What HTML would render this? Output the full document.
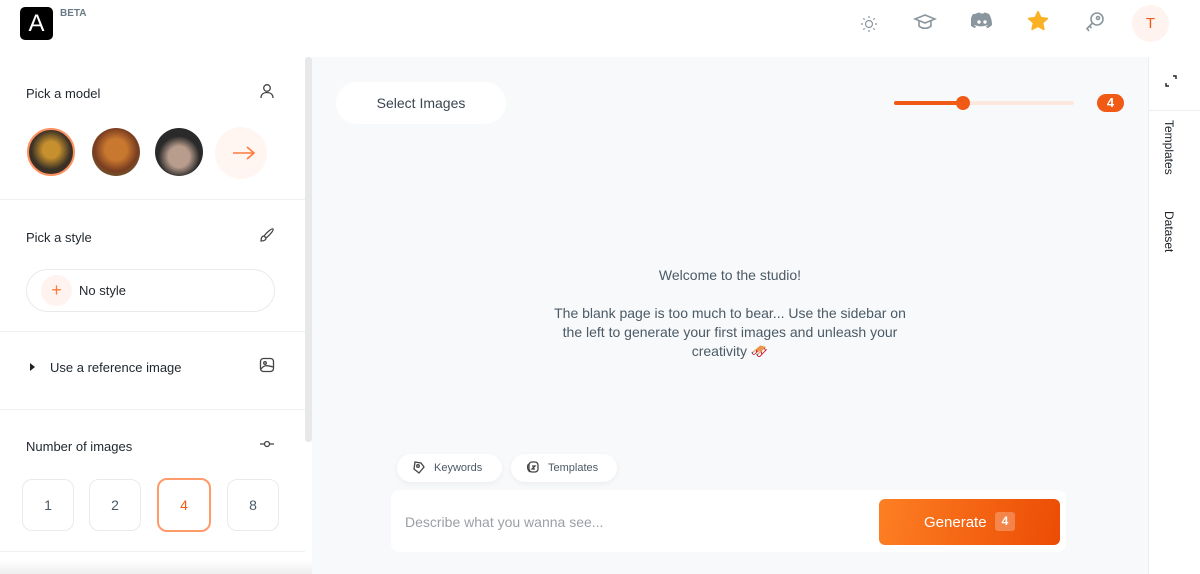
<!DOCTYPE html>
<html><head><meta charset="utf-8"><style>
*{box-sizing:border-box;margin:0;padding:0}
body{width:1200px;height:574px;overflow:hidden;background:#fff;font-family:"Liberation Sans",sans-serif;position:relative;color:#2d3339}
.abs{position:absolute}
.hdr{left:0;top:0;width:1200px;height:57px;background:#fff}
.logo{left:20px;top:7px;width:33px;height:33px;background:#000;border-radius:5px;color:#fff;font-size:24px;text-align:center;line-height:34px}
.beta{left:60px;top:8px;font-size:10px;font-weight:bold;color:#6b7a85}
.side{left:0;top:57px;width:305px;height:517px;background:#fff}
.sb{left:305px;top:57px;width:7px;height:385px;background:#e8e8e8;border-radius:3px}
.main{left:312px;top:57px;width:836px;height:517px;background:#f8f9fa}
.right{left:1148px;top:57px;width:52px;height:517px;background:#fff;border-left:1px solid #eee}
.h{font-size:13px;color:#1f262c}
.sep{height:1px;background:#eef0f2;left:0;width:305px}
.av{width:48px;height:48px;border-radius:50%}
.num{width:52px;height:52px;border:1px solid #e8eaec;border-radius:10px;text-align:center;line-height:50px;font-size:14px;color:#4a5a66}
.ic{stroke:#444;fill:none;stroke-width:1.3}
</style></head><body>
<div class="abs hdr"></div>
<div class="abs logo">A</div>
<div class="abs beta">BETA</div>
<svg class="abs" style="left:860px;top:15px" width="18" height="18" viewBox="0 0 18 18"><g stroke="#8a969e" stroke-width="1.2" fill="none"><circle cx="9" cy="9" r="3.5"/><path d="M9 1v2M9 15v2M1 9h2M15 9h2M3.3 3.3l1.4 1.4M13.3 13.3l1.4 1.4M3.3 14.7l1.4-1.4M13.3 4.7l1.4-1.4"/></g></svg>
<svg class="abs" style="left:913px;top:12px" width="24" height="20" viewBox="0 0 24 20"><g stroke="#8a969e" stroke-width="1.6" fill="none"><path d="M2 7l10-4 10 4-10 4z"/><path d="M6 9v5c3 3 9 3 12 0V9"/></g></svg>
<svg class="abs" style="left:971px;top:12px" width="22" height="18" viewBox="0 0 22 18"><path fill="#8a969e" d="M4 2c2-1 4-1.5 5-1.5l.5 1h3l.5-1c1 0 3 .5 5 1.5 2 3 3 7 3 11-2 2-4 3-5 3l-1-2c1-.3 2-.8 2-.8l-.5-.3c-4 2-9 2-13 0l-.5.3s1 .5 2 .8l-1 2c-1 0-3-1-5-3 0-4 1-8 3-11z"/><circle cx="8" cy="10" r="1.7" fill="#fff"/><circle cx="14" cy="10" r="1.7" fill="#fff"/></svg>
<svg class="abs" style="left:1027px;top:10px" width="22" height="22" viewBox="0 0 24 24"><path fill="#fbb124" stroke="#fbb124" stroke-linejoin="round" stroke-width="2" d="M12 2l3 6.5 7 .8-5.2 4.8 1.5 7L12 17.5 5.7 21l1.5-7L2 9.3l7-.8z"/></svg>
<svg class="abs" style="left:1084px;top:11px" width="22" height="22" viewBox="0 0 22 22"><g stroke="#8a969e" stroke-width="1.6" fill="none"><circle cx="13" cy="8" r="6"/><circle cx="14" cy="7" r="1.5"/><path d="M8.5 12L3 17.5 5 20M5.5 15l2 2"/></g></svg>
<div class="abs" style="left:1132px;top:5px;width:37px;height:37px;border-radius:50%;background:#fff3ef;color:#f05a14;text-align:center;line-height:37px;font-size:15px">T</div>

<div class="abs side"></div>
<div class="abs sb"></div>
<div class="abs h" style="left:26px;top:86px">Pick a model</div>
<svg class="abs" style="left:259px;top:83px" width="16" height="16" viewBox="0 0 16 16"><g class="ic"><circle cx="8" cy="5" r="3.3"/><path d="M2 15c0-4 3-5.5 6-5.5s6 1.5 6 5.5"/></g></svg>
<div class="abs av" style="left:27px;top:128px;border:2px solid #ff9160;background:radial-gradient(circle at 50% 45%,#c7902e 0 25%,#3a3126 60%)"></div>
<div class="abs av" style="left:92px;top:128px;background:radial-gradient(circle at 50% 45%,#c9782f 0 30%,#7a3d20 60%,#5a7a45 100%)"></div>
<div class="abs av" style="left:155px;top:128px;background:radial-gradient(circle at 50% 60%,#b89c8c 0 28%,#2a2a2a 55%)"></div>
<div class="abs" style="left:215px;top:127px;width:52px;height:52px;border-radius:50%;background:#fff5f1"></div>
<svg class="abs" style="left:231px;top:144px" width="26" height="18" viewBox="0 0 26 18"><path d="M2 9h21M16 3l7 6-7 6" stroke="#ff7a3d" stroke-width="1.6" fill="none"/></svg>
<div class="abs sep" style="top:199px"></div>
<div class="abs h" style="left:26px;top:230px">Pick a style</div>
<svg class="abs" style="left:259px;top:227px" width="16" height="16" viewBox="0 0 16 16"><g class="ic"><path d="M14 2c-1 -1-6 3-9 7l2 2c4-3 8-8 7-9z"/><path d="M5 9c-2 0-3 2-3 5 3 0 5-1 5-3"/></g></svg>
<div class="abs" style="left:26px;top:269px;width:249px;height:43px;border:1px solid #e8eaec;border-radius:22px"></div>
<div class="abs" style="left:41px;top:275px;width:31px;height:31px;border-radius:50%;background:#fff3ef;color:#ff7a3d;text-align:center;line-height:30px;font-size:18px">+</div>
<div class="abs h" style="left:79px;top:283px">No style</div>
<div class="abs sep" style="top:331px"></div>
<div class="abs" style="left:30px;top:363px;width:0;height:0;border-left:5px solid #1c2329;border-top:4px solid transparent;border-bottom:4px solid transparent"></div>
<div class="abs h" style="left:50px;top:360px">Use a reference image</div>
<svg class="abs" style="left:259px;top:357px" width="16" height="16" viewBox="0 0 16 16"><g class="ic"><rect x="1.5" y="1.5" width="13" height="13" rx="3"/><circle cx="6" cy="6" r="1.3"/><path d="M2 12c3-4 6-4 12-2"/></g></svg>
<div class="abs sep" style="top:409px"></div>
<div class="abs h" style="left:26px;top:439px">Number of images</div>
<svg class="abs" style="left:259px;top:438px" width="16" height="12" viewBox="0 0 16 12"><g class="ic"><circle cx="8" cy="6" r="2.5"/><path d="M1 6h4.5M10.5 6H15"/></g></svg>
<div class="abs num" style="left:22px;top:479px">1</div>
<div class="abs num" style="left:89px;top:479px">2</div>
<div class="abs num" style="left:157px;top:478px;border:2px solid #ff9a6a;color:#f05a14;width:54px;height:54px">4</div>
<div class="abs num" style="left:227px;top:479px">8</div>
<div class="abs sep" style="top:551px"></div>
<div class="abs" style="left:0;top:560px;width:1200px;height:14px;background:linear-gradient(#fff0,#eee)"></div>

<div class="abs main"></div>
<div class="abs" style="left:336px;top:82px;width:170px;height:42px;background:#fff;border-radius:21px;text-align:center;line-height:42px;font-size:14px;color:#3a4650">Select Images</div>
<div class="abs" style="left:894px;top:101px;width:180px;height:4px;background:#fde8dd;border-radius:2px"></div>
<div class="abs" style="left:894px;top:101px;width:70px;height:4px;background:#f05a14;border-radius:2px"></div>
<div class="abs" style="left:956px;top:96px;width:14px;height:14px;background:#f05a14;border-radius:50%"></div>
<div class="abs" style="left:1097px;top:94px;width:27px;height:18px;background:#f05a14;border-radius:9px;color:#fff;font-weight:bold;font-size:13px;text-align:center;line-height:18px">4</div>
<div class="abs" style="left:545px;top:266px;width:370px;text-align:center;font-size:14px;color:#4a5a66;line-height:19px">Welcome to the studio!<br><br>The blank page is too much to bear... Use the sidebar on the left to generate your first images and unleash your creativity 🛷</div>

<div class="abs" style="left:397px;top:454px;width:105px;height:28px;background:#fff;border-radius:14px;box-shadow:0 2px 6px #0000000d;font-size:11px;color:#4a5a66;line-height:28px;padding-left:37px">Keywords</div>
<svg class="abs" style="left:412px;top:460px" width="14" height="14" viewBox="0 0 14 14"><g class="ic"><path d="M3 2l6 1 3 4-5 6-5-4z"/><circle cx="6" cy="6" r="1.3"/></g></svg>
<div class="abs" style="left:511px;top:454px;width:106px;height:28px;background:#fff;border-radius:14px;box-shadow:0 2px 6px #0000000d;font-size:11px;color:#4a5a66;line-height:28px;padding-left:37px">Templates</div>
<svg class="abs" style="left:526px;top:460px" width="14" height="14" viewBox="0 0 14 14"><g class="ic"><rect x="3" y="2" width="9" height="10" rx="3"/><path d="M3 4c-2 1-2 6 1 8"/><path d="M6 6h3l-3 3h3"/></g></svg>
<div class="abs" style="left:391px;top:490px;width:675px;height:62px;background:#fff;border-radius:8px"></div>
<div class="abs" style="left:405px;top:514px;font-size:14px;color:#9aa0a6">Describe what you wanna see...</div>
<div class="abs" style="left:879px;top:499px;width:181px;height:46px;border-radius:6px;background:linear-gradient(100deg,#fd7f23,#ec4c05)"></div>
<div class="abs" style="left:924px;top:514px;font-size:15px;color:#fff">Generate</div>
<div class="abs" style="left:995px;top:512px;width:20px;height:19px;background:#ffffff40;border-radius:3px;color:#fff;font-size:12px;font-weight:bold;text-align:center;line-height:19px">4</div>

<div class="abs right"></div>
<div class="abs" style="left:1148px;top:110px;width:52px;height:1px;background:#eee"></div>
<svg class="abs" style="left:1165px;top:75px" width="12" height="12" viewBox="0 0 12 12"><path d="M8 1h3v3M1 8v3h3" stroke="#222" stroke-width="1.4" fill="none"/></svg>
<div class="abs" style="left:1162px;top:120px;writing-mode:vertical-rl;font-size:12px;color:#1c2329">Templates</div>
<div class="abs" style="left:1162px;top:211px;writing-mode:vertical-rl;font-size:12px;color:#1c2329">Dataset</div>
</body></html>
